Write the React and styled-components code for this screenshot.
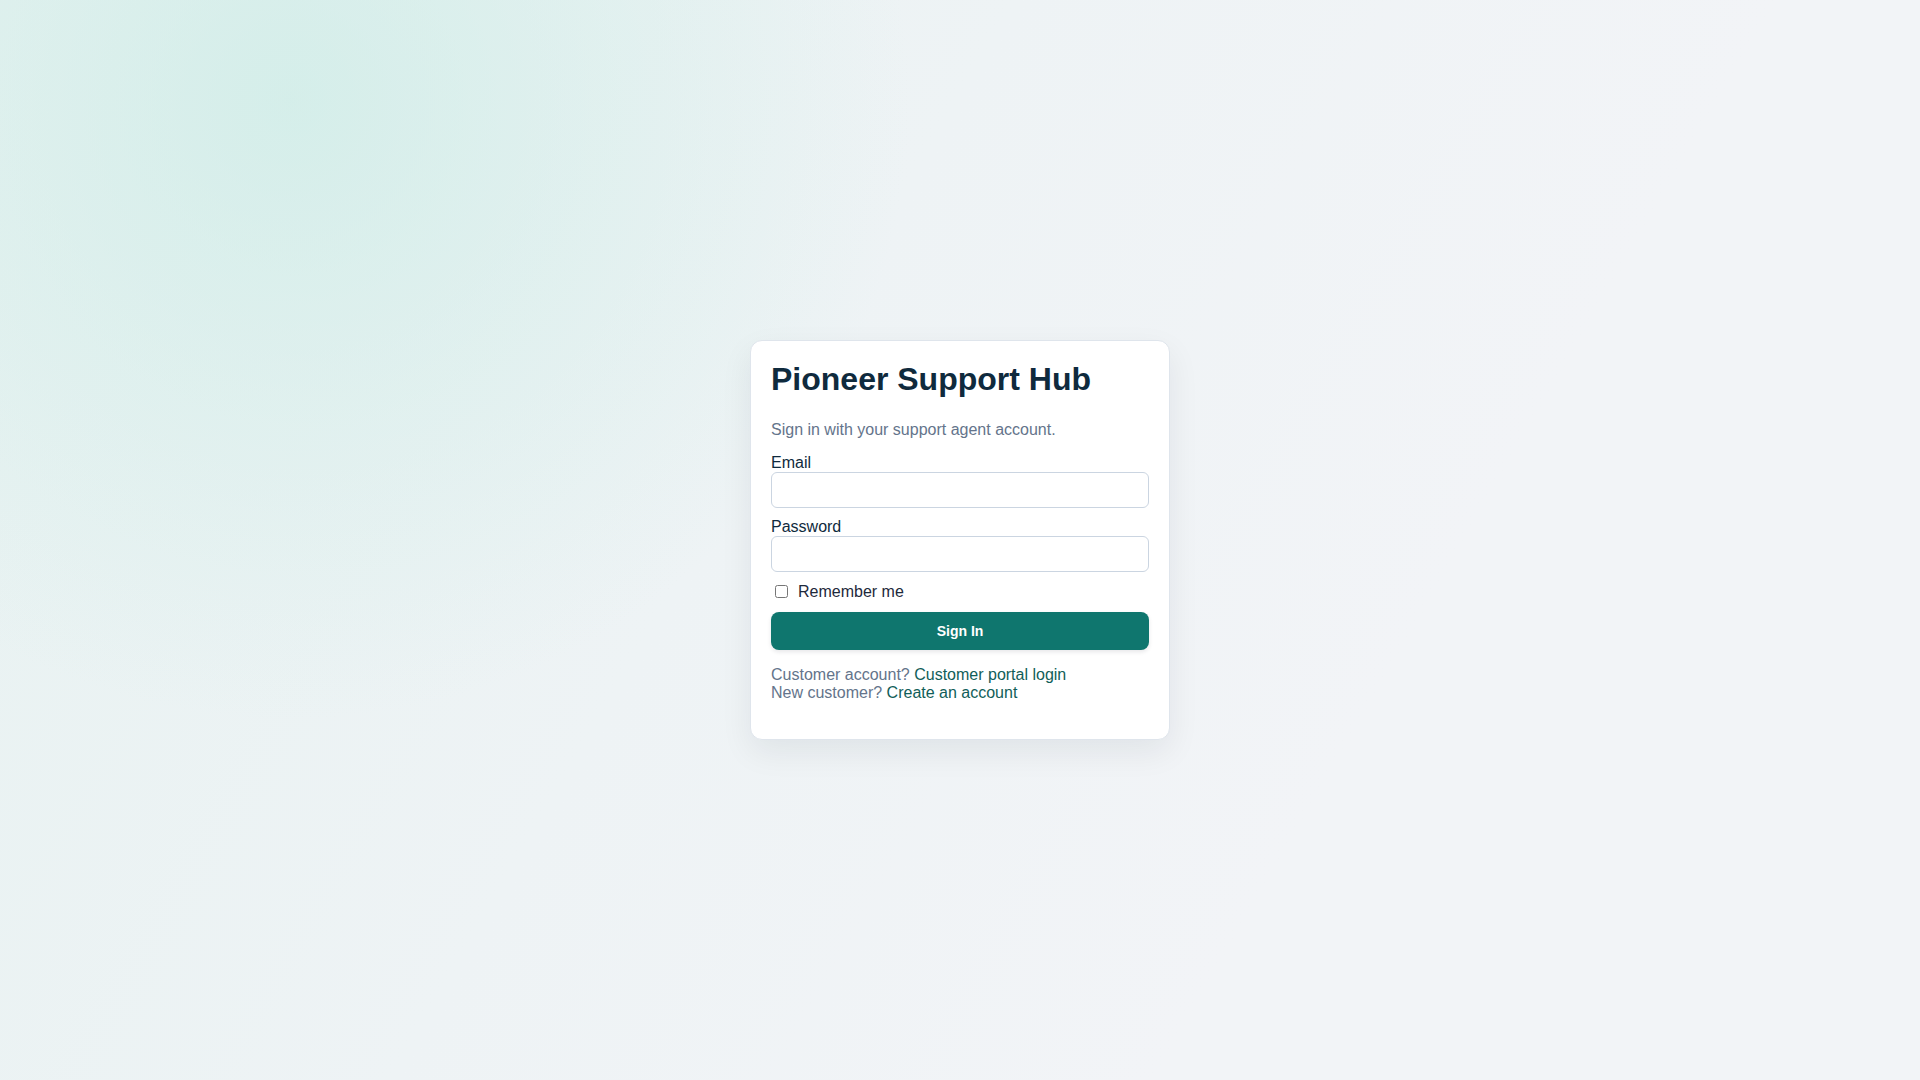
import React from "react";
import styled, { createGlobalStyle } from "styled-components";

const Global = createGlobalStyle`
  html, body { margin: 0; padding: 0; }
  body {
    font-family: "Liberation Sans", Arial, sans-serif;
    color: #0f2a3d;
  }
  * { box-sizing: border-box; }
`;

const Page = styled.div`
  min-height: 100vh;
  display: flex;
  align-items: center;
  justify-content: center;
  background:
    radial-gradient(circle 620px at 290px 100px, rgba(204, 236, 230, 0.7), rgba(204, 236, 230, 0) 100%),
    linear-gradient(120deg, #e7f2f1 0%, #eef3f5 40%, #f2f4f7 70%, #f2f4f7 100%);
`;

const Card = styled.div`
  width: 420px;
  background: #ffffff;
  border: 1px solid #dfe5ec;
  border-radius: 12px;
  padding: 20px;
  box-shadow: 0 12px 32px rgba(15, 23, 42, 0.07);
`;

const Title = styled.h1`
  margin: 0 0 23px;
  font-size: 32px;
  line-height: 37px;
  font-weight: 700;
  color: #0f2a3d;
`;

const Subtitle = styled.p`
  margin: 0 0 15px;
  font-size: 16px;
  line-height: 18px;
  color: #64748b;
`;

const Form = styled.form`
  display: flex;
  flex-direction: column;
`;

const Label = styled.label`
  display: block;
  font-size: 16px;
  line-height: 18px;
  color: #0f2a3d;
`;

const Input = styled.input`
  display: block;
  width: 100%;
  height: 36px;
  margin: 0 0 10px;
  padding: 8px 10px;
  border: 1px solid #cbd5e1;
  border-radius: 6px;
  font-family: inherit;
  font-size: 14px;
  background: #fff;
  outline: none;
`;

const CheckRow = styled.label`
  display: flex;
  align-items: center;
  gap: 7px;
  margin: 0 0 11px;
  font-size: 16px;
  line-height: 19px;
  color: #1e293b;
`;

const Check = styled.input`
  width: 13px;
  height: 13px;
  margin: 3px 3px 3px 4px;
`;

const Button = styled.button`
  width: 100%;
  height: 38px;
  border: none;
  border-radius: 8px;
  background: #0f766e;
  color: #fff;
  font-family: inherit;
  font-size: 14px;
  font-weight: 700;
  cursor: pointer;
  box-shadow: 0 2px 4px rgba(15, 23, 42, 0.1);
`;

const Footer = styled.p`
  margin: 16px 0 17px;
  font-size: 16px;
  line-height: 18px;
  color: #64748b;
`;

const Link = styled.a`
  color: #115e59;
  text-decoration: none;
`;

export default function App() {
  return (
    <>
      <Global />
      <Page>
        <Card>
          <Title>Pioneer Support Hub</Title>
          <Subtitle>Sign in with your support agent account.</Subtitle>
          <Form onSubmit={(e) => e.preventDefault()}>
            <Label htmlFor="email">Email</Label>
            <Input id="email" type="email" />
            <Label htmlFor="password">Password</Label>
            <Input id="password" type="password" />
            <CheckRow>
              <Check type="checkbox" />
              Remember me
            </CheckRow>
            <Button type="submit">Sign In</Button>
          </Form>
          <Footer>
            Customer account? <Link href="#">Customer portal login</Link>
            <br />
            New customer? <Link href="#">Create an account</Link>
          </Footer>
        </Card>
      </Page>
    </>
  );
}
